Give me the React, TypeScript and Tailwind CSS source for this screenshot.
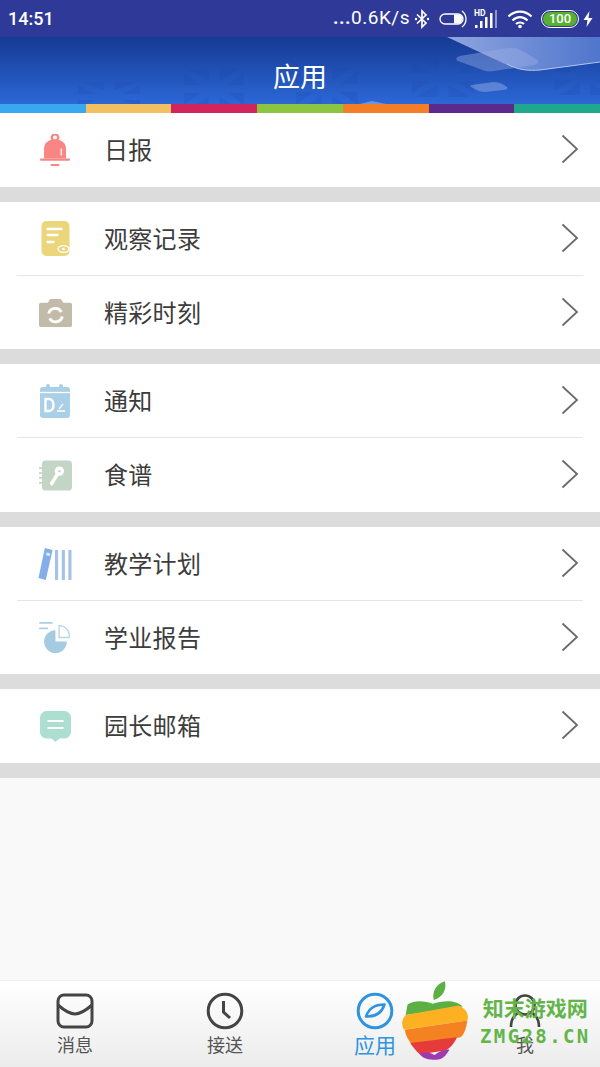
import React from "react";

const font = { fontFamily: '"Noto Sans CJK SC", "Noto Sans", sans-serif' };

const Bell = () => (
  <svg width="30" height="33" viewBox="0.5 2.5 30 33">
    <circle cx="15.5" cy="6" r="3.2" fill="none" stroke="#f98585" strokeWidth="2.4" />
    <path d="M4.5 27V18C4.5 11 9 8 15.500 8S26.500 11 26.500 18V27Z" fill="#f98585" />
    <rect x="0.500" y="27" width="30" height="2.200" rx="1" fill="#f98585" />
    <rect x="11" y="32.500" width="9" height="2" rx="1" fill="#f98585" />
    <rect x="21" y="17" width="1.600" height="7" fill="#fff" opacity="0.8" />
  </svg>
);
const Note = () => (
  <svg width="29" height="35" viewBox="3 0 28 35">
    <rect x="3" y="0" width="28" height="35" rx="5" fill="#ecd67c" />
    <path d="M9 8H23M9 14H19M9 21H15" stroke="#fff" strokeWidth="2.300" strokeLinecap="round" />
    <ellipse cx="25" cy="28" rx="5.500" ry="3.300" fill="none" stroke="#fff" strokeWidth="1.300" />
    <circle cx="25" cy="28" r="1.300" fill="#fff" />
  </svg>
);
const Camera = () => (
  <svg width="33" height="30" viewBox="1 1 34 29">
    <path d="M3 5H10L12.500 1H23.500L26 5H33A2 2 0 0 1 35 7V28A2 2 0 0 1 33 30H3A2 2 0 0 1 1 28V7A2 2 0 0 1 3 5Z" fill="#c2bbaa" />
    <path d="M11 16A7 7 0 0 1 24 14.500M25 19A7 7 0 0 1 12 21" fill="none" stroke="#fff" strokeWidth="3" />
  </svg>
);
const Calendar = () => (
  <svg width="30" height="34" viewBox="2 0 30 34">
    <rect x="2" y="3" width="30" height="31" rx="3" fill="#a9d0e6" />
    <rect x="8" y="0" width="4" height="6" rx="2" fill="#a9d0e6" />
    <rect x="21" y="0" width="4" height="6" rx="2" fill="#a9d0e6" />
    <path d="M2 8.500H32" stroke="#fff" strokeWidth="1.300" />
    <path d="M7.500 15V27H11C17 27 17 15 11 15Z" fill="none" stroke="#fff" strokeWidth="2.400" />
    <path d="M19 27H27M21 25L25 20" stroke="#fff" strokeWidth="1.300" />
  </svg>
);
const Recipe = () => (
  <svg width="33" height="31" viewBox="1 1 34 31">
    <rect x="4" y="1" width="31" height="31" rx="4" fill="#c3d5c5" />
    <path d="M1 9H7M1 14H7M1 19H7M1 24H7" stroke="#c3d5c5" strokeWidth="1.800" strokeLinecap="round" />
    <path d="M14 25L20 15" stroke="#fff" strokeWidth="3.600" strokeLinecap="round" />
    <circle cx="22" cy="12" r="4.800" fill="#fff" />
    <circle cx="22" cy="12" r="1.200" fill="#c3d5c5" />
  </svg>
);
const Books = () => (
  <svg width="34" height="32" viewBox="1 1 34 33">
    <path d="M7.500 1L15.500 3L8.500 34L1 32Z" fill="#84aeea" />
    <rect x="9" y="6" width="4" height="3" fill="#dce8f8" transform="rotate(13 11 7)" />
    <rect x="18" y="3" width="3.200" height="31" fill="#a4c2e8" />
    <rect x="25" y="3" width="3.200" height="31" fill="#a4c2e8" />
    <rect x="31.800" y="3" width="3.200" height="31" fill="#a4c2e8" />
  </svg>
);
const Pie = () => (
  <svg width="34" height="31" viewBox="0 1 35 34">
    <path d="M1 2H14M1 8H9" stroke="#a9d0e6" strokeWidth="2" strokeLinecap="round" />
    <path d="M18 10A12.500 12.500 0 1 0 30.500 22.500H18Z" fill="#a5cbe3" />
    <path d="M22 5A11 11 0 0 1 33 18H22Z" fill="#fff" stroke="#b9d6e8" strokeWidth="1.500" />
  </svg>
);
const Mail = () => (
  <svg width="31" height="31" viewBox="1.500 1 31 31">
    <path d="M8 1H26A6.500 6.500 0 0 1 32.500 7.500V22A6.500 6.500 0 0 1 26 28.500H21L17 32L13 28.500H8A6.500 6.500 0 0 1 1.500 22V7.500A6.500 6.500 0 0 1 8 1Z" fill="#acdfd0" />
    <path d="M9 11H25M9 18H25" stroke="#fff" strokeWidth="1.800" />
  </svg>
);
const Chevron = () => (
  <svg width="20" height="30" viewBox="0 0 20 30" className="shrink-0">
    <path d="M2.500 1.500L17 15L2.500 28.500" fill="none" stroke="#6a6a6a" strokeWidth="1.800" />
  </svg>
);

type RowT = { label: string; icon: React.ReactNode };

const groups: { rows: RowT[]; gap: string; lastH: string }[] = [
  { rows: [{ label: "日报", icon: <Bell /> }], gap: "h-[15px]", lastH: "h-[74px]" },
  {
    rows: [
      { label: "观察记录", icon: <Note /> },
      { label: "精彩时刻", icon: <Camera /> },
    ],
    gap: "h-[15px]",
    lastH: "h-[73px]",
  },
  {
    rows: [
      { label: "通知", icon: <Calendar /> },
      { label: "食谱", icon: <Recipe /> },
    ],
    gap: "h-[15px]",
    lastH: "h-[74px]",
  },
  {
    rows: [
      { label: "教学计划", icon: <Books /> },
      { label: "学业报告", icon: <Pie /> },
    ],
    gap: "h-[15px]",
    lastH: "h-[73px]",
  },
  { rows: [{ label: "园长邮箱", icon: <Mail /> }], gap: "h-[15px]", lastH: "h-[74px]" },
];

const StatusBar = () => (
  <div className="flex h-[37px] items-center justify-between bg-[#2f3a98] pl-[8px] pr-[6px] text-white">
    <span className="text-[18px] font-medium" style={{ fontFamily: "Roboto, sans-serif" }}>14:51</span>
    <div className="flex items-center">
      <span className="text-[19px] tracking-[0.5px]" style={{ fontFamily: "Roboto, sans-serif" }}>
        <b className="font-bold">...</b>0.6K/s
      </span>
      <svg width="16" height="20" viewBox="0 0 16 20" className="ml-[4px]">
        <path d="M3 5.500L12 14L8 18V2L12 6L3 14.500" fill="none" stroke="#fff" strokeWidth="1.700" />
        <circle cx="2" cy="10" r="1.200" fill="#fff" />
        <circle cx="14" cy="10" r="1.200" fill="#fff" />
      </svg>
      <svg width="30" height="20" viewBox="0 0 30 20" className="ml-[9px]">
        <rect x="1" y="5" width="23" height="10" rx="5" fill="none" stroke="#fff" strokeWidth="1.300" />
        <path d="M15 5.500H19A4.500 4.500 0 0 1 19 14.500H15Z" fill="#fff" />
        <path d="M23 2A10 10 0 0 1 23 18" fill="none" stroke="#fff" strokeWidth="1.300" />
      </svg>
      <svg width="24" height="22" viewBox="0 0 24 22" className="ml-[5px]">
        <text x="0" y="8" fontSize="8.500" fontWeight="700" fill="#fff" fontFamily="Roboto, sans-serif">HD</text>
        <rect x="1" y="17" width="2.500" height="3" fill="#fff" />
        <rect x="6" y="13" width="2.500" height="7" fill="#fff" />
        <rect x="11" y="9" width="2.500" height="11" fill="#fff" />
        <rect x="16" y="5" width="2.500" height="15" fill="#fff" />
        <rect x="21" y="2" width="2" height="18" fill="#8f96cc" />
      </svg>
      <svg width="26" height="20" viewBox="0 0 26 20" className="ml-[9px]">
        <path d="M1.500 7.500C8 1 18 1 24.500 7.500M5.500 11.500C10 7 16 7 20.500 11.500M9 15C11 13 15 13 17 15" fill="none" stroke="#fff" strokeWidth="2.200" />
        <circle cx="13" cy="17.500" r="1.800" fill="#fff" />
      </svg>
      <div className="ml-[8px] flex h-[18px] w-[38px] items-center justify-center rounded-[9px] border border-white p-[1px]">
        <div className="flex h-full w-full items-center justify-center rounded-[7px] bg-[#57b030] text-[13px] font-medium leading-none" style={{ fontFamily: "Roboto, sans-serif" }}>100</div>
      </div>
      <svg width="12" height="18" viewBox="0 0 12 18" className="ml-[3px]">
        <path d="M7.500 1L1.500 10H5.500L4.500 17L10.500 8H6.500Z" fill="#fff" />
      </svg>
    </div>
  </div>
);

const stripes = ["bg-[#38a8f0]", "bg-[#f2c060]", "bg-[#d3245c]", "bg-[#8cc640]", "bg-[#f47e28]", "bg-[#5b2a8c]", "bg-[#1fa88c]"];

const Flag = ({ x, y, w, h }: { x: number; y: number; w: number; h: number }) => {
  const mx = x + w / 2;
  const my = y + h / 2;
  const g = w * 0.09;
  const gy = h * 0.1;
  const r = x + w;
  const b = y + h;
  return (
    <path
      opacity={0.2}
      fill="#1c45aa"
      d={`M${x + 4} ${y}L${mx - g} ${my - gy - 4}V${y}Z
          M${mx + g} ${y}V${my - gy - 4}L${r - 4} ${y}Z
          M${r} ${y + 4}L${mx + g + 8} ${my - gy}H${r}Z
          M${x} ${y + 4}V${my - gy}H${mx - g - 8}Z
          M${x} ${my + gy}H${mx - g - 8}L${x} ${b - 4}Z
          M${x + 4} ${b}L${mx - g} ${my + gy + 4}V${b}Z
          M${mx + g} ${b}V${my + gy + 4}L${r - 4} ${b}Z
          M${r} ${b - 4}L${mx + g + 8} ${my + gy}H${r}Z`}
    />
  );
};

const Header = () => (
  <div className="relative h-[76px] overflow-hidden bg-gradient-to-b from-[#163a94] to-[#2f6ee0]">
    <svg className="absolute inset-0" width="600" height="76" viewBox="0 0 600 76">
      <defs>
        <linearGradient id="sheet" x1="0" y1="0" x2="1" y2="0">
          <stop offset="0" stopColor="#8fa5de" />
          <stop offset="0.5" stopColor="#6f8dd6" />
          <stop offset="1" stopColor="#4f76cc" />
        </linearGradient>
      </defs>
      <Flag x={78} y={45} w={62} h={30} />
      <Flag x={184} y={32} w={60} h={40} />
      <Flag x={296} y={30} w={62} h={42} />
      <Flag x={412} y={20} w={62} h={40} />
      <Flag x={555} y={20} w={60} h={38} />
      <path d="M447 0H600V25L540 33C528 34 518 33 505 27Z" fill="url(#sheet)" />
      <path d="M507 27C518 33 528 34 540 33L600 25" fill="none" stroke="#b4c6ee" strokeWidth="1" />
      <path d="M460 19L508 11C513 10 518 11 522 14L536 22C540 25 538 27 534 28L494 34C489 35 484 34 480 32L458 24C455 22 456 20 460 19Z" fill="#9db2e6" opacity="0.4" />
      <path d="M472 48L493 45C497 45 501 46 504 48L507 50C508 52 506 53 503 53L485 55C481 55 478 54 475 52L471 50C470 49 470 48 472 48Z" fill="#9db2e6" opacity="0.45" />
      <path d="M360 67L372 64L386 67Z" fill="#9db2e6" opacity="0.6" />
    </svg>
    <div className="relative flex h-full items-center justify-center pt-[2px] text-[27px] text-white" style={font}>应用</div>
    <div className="absolute bottom-0 left-0 right-0 flex h-[9px]">
      {stripes.map((s) => (
        <div key={s} className={`flex-1 ${s}`} />
      ))}
    </div>
  </div>
);

const Row = ({ row, last, lastH }: { row: RowT; last: boolean; lastH: string }) => (
  <div className="px-[17px]">
    <div className={`flex items-center ${last ? lastH : "h-[74px] border-b border-[#e6e6e6]"}`}>
      <div className="flex w-[76px] shrink-0 justify-center">{row.icon}</div>
      <span className="flex-1 pb-[2px] pl-[11px] text-[24px] tracking-[0.3px] text-[#3c3c3c]" style={font}>{row.label}</span>
      <div className="pb-[2px] pr-[3px]"><Chevron /></div>
    </div>
  </div>
);

const Tab = ({ label, icon, active }: { label: string; icon: React.ReactNode; active?: boolean }) => (
  <div className="flex w-[150px] flex-col items-center">
    <div className="flex h-[38px] items-center">{icon}</div>
    <span className={`pt-[2px] leading-[24px] ${active ? "text-[21px] text-[#2e93e0]" : "text-[18px] text-[#555]"}`} style={font}>{label}</span>
  </div>
);

const TabBar = () => (
  <div className="flex h-[87px] justify-around border-t border-[#f0f0f0] bg-gradient-to-b from-white to-[#ececec] pt-[11px]">
    <Tab label="消息" icon={
      <svg width="38" height="36" viewBox="0 0 38 36">
        <rect x="2" y="2" width="34" height="32" rx="6" fill="none" stroke="#444" strokeWidth="3" />
        <path d="M2 12C10 19 15 21 19 21S28 19 36 12" fill="none" stroke="#444" strokeWidth="3" />
      </svg>
    } />
    <Tab label="接送" icon={
      <svg width="38" height="38" viewBox="0 0 38 38">
        <circle cx="19" cy="19" r="16.800" fill="none" stroke="#444" strokeWidth="3" />
        <path d="M17.500 9V20L24 26" fill="none" stroke="#444" strokeWidth="3" />
      </svg>
    } />
    <Tab active label="应用" icon={
      <svg width="38" height="38" viewBox="0 0 38 38">
        <circle cx="19" cy="19" r="16.800" fill="none" stroke="#2e93e0" strokeWidth="3" />
        <path d="M10 24.500C13 15.500 19 12.500 28.500 12.500C25.500 21.500 19 25 10 24.500Z" fill="none" stroke="#2e93e0" strokeWidth="2.600" strokeLinejoin="round" />
      </svg>
    } />
    <Tab label="我" icon={
      <svg width="38" height="38" viewBox="0 0 38 38">
        <circle cx="19" cy="13" r="9.500" fill="none" stroke="#444" strokeWidth="2.600" />
        <path d="M5 35C5 28 8 23 12.500 20.500M33 35C33 28 30 23 25.500 20.500" fill="none" stroke="#444" strokeWidth="2.600" />
      </svg>
    } />
  </div>
);

const Watermark = () => (
  <div className="absolute bottom-[7px] left-[401px] flex items-center">
    <svg width="71" height="79" viewBox="0 0 76 84">
      <path d="M35 20C33 10 38 3 47 0C49 9 45 17 35 20Z" fill="#5cb043" />
      <path d="M7 25C16 19 27 22 34 24C44 21 58 19 66 27L5 36Z" fill="#5cb043" />
      <path d="M5 36L62 26C70 30 73 36 71 42L3 52C0 46 1 40 5 36Z" fill="#fdb022" />
      <path d="M4 52L71 42C70 50 68 56 64 60L12 68C8 64 5 58 4 52Z" fill="#f58220" />
      <path d="M10 66L60 60C56 68 52 72 48 74L20 78C16 74 12 70 10 66Z" fill="#e53b3b" />
      <path d="M20 78C28 74 34 78 36 79C40 75 46 73 52 73C48 80 44 84 38 84C34 84 24 84 20 78Z" fill="#9c3bb0" />
    </svg>
    <div className="ml-[8px] flex flex-col items-center">
      <span className="text-[21px] font-bold leading-[24px] text-[#63b54a]" style={font}>知末游戏网</span>
      <span className="mt-[6px] text-[19px] font-bold leading-[22px] tracking-[2.4px] text-[#63b54a]" style={{ fontFamily: '"DejaVu Sans Mono", monospace' }}>ZMG28.CN</span>
    </div>
  </div>
);

export default function App() {
  return (
    <div className="relative flex h-[1067px] w-[600px] flex-col overflow-hidden bg-[#f9f9f9]">
      <StatusBar />
      <Header />
      <div className="flex-1">
        {groups.map((g, i) => (
          <div key={i}>
            <div className="bg-white">
              {g.rows.map((r, j) => (
                <Row key={r.label} row={r} last={j === g.rows.length - 1} lastH={g.lastH} />
              ))}
            </div>
            <div className={`${g.gap} bg-[#dcdcdc]`} />
          </div>
        ))}
      </div>
      <TabBar />
      <Watermark />
    </div>
  );
}
